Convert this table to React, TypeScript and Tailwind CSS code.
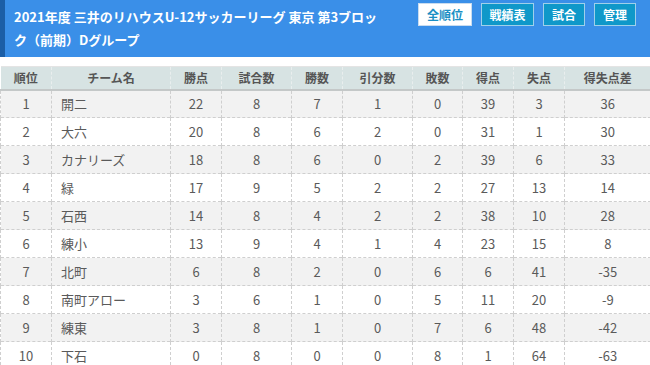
import React from 'react';

const rows = [
  [1, '開二', 22, 8, 7, 1, 0, 39, 3, 36],
  [2, '大六', 20, 8, 6, 2, 0, 31, 1, 30],
  [3, 'カナリーズ', 18, 8, 6, 0, 2, 39, 6, 33],
  [4, '緑', 17, 9, 5, 2, 2, 27, 13, 14],
  [5, '石西', 14, 8, 4, 2, 2, 38, 10, 28],
  [6, '練小', 13, 9, 4, 1, 4, 23, 15, 8],
  [7, '北町', 6, 8, 2, 0, 6, 6, 41, -35],
  [8, '南町アロー', 3, 6, 1, 0, 5, 11, 20, -9],
  [9, '練東', 3, 8, 1, 0, 7, 6, 48, -42],
  [10, '下石', 0, 8, 0, 0, 8, 1, 64, -63],
];

const heads = ['順位', 'チーム名', '勝点', '試合数', '勝数', '引分数', '敗数', '得点', '失点', '得失点差'];
const widths = [51, 119, 51, 70, 51, 70, 50, 51, 51, 86];

export default function App() {
  return (
    <div className="w-[650px] h-[365px] overflow-hidden bg-white font-['Noto_Sans_CJK_JP',sans-serif]">
      <header className="flex h-[57px] bg-[#3a8fe8] border-l-[5px] border-[#1b5ea6]">
        <h1 className="w-[389px] shrink-0 pl-[9px] pt-[5px] text-[13px] leading-[23px] font-bold text-white whitespace-nowrap">
          2021年度 三井のリハウスU-12サッカーリーグ 東京 第3ブロッ
          <br />
          ク（前期）Dグループ
        </h1>
        <nav className="flex gap-[9px] pl-[24px] pt-[3px] items-start">
          <button className="h-[23px] w-[54px] bg-white border border-[#c9dcef] text-[#1a8fc4] text-[12px] font-bold">全順位</button>
          <button className="h-[23px] w-[53px] bg-[#0f98c9] border border-[#9fd0ea] text-white text-[12px] font-bold">戦績表</button>
          <button className="h-[23px] w-[42px] bg-[#0f98c9] border border-[#9fd0ea] text-white text-[12px] font-bold">試合</button>
          <button className="h-[23px] w-[42px] bg-[#0f98c9] border border-[#9fd0ea] text-white text-[12px] font-bold">管理</button>
        </nav>
      </header>
      <table className="mt-[9px] w-[650px] table-fixed border-collapse text-[13px] text-[#5a5a5a]">
        <colgroup>
          {widths.map((w, i) => (
            <col key={i} style={{ width: w }} />
          ))}
        </colgroup>
        <thead>
          <tr className="h-[23px] bg-[#d7e3e3] border-t border-[#e4e4e4] border-b-2 border-b-[#c4c8c8]">
            {heads.map((h, i) => (
              <th key={i} className="border-l border-dashed border-l-[#e9eeee] first:border-l-0 text-[12px] font-bold text-[#555] text-center">{h}</th>
            ))}
          </tr>
        </thead>
        <tbody>
          {rows.map((r, ri) => (
            <tr key={ri} className={`h-[28px] border-b border-dashed border-[#cfcfcf] ${ri % 2 === 0 ? 'bg-[#f2f2f2]' : 'bg-white'}`}>
              {r.map((c, ci) => (
                <td
                  key={ci}
                  className={`border-l border-dashed border-[#cfcfcf] ${ci === 1 ? 'text-left pl-[9px]' : 'text-center'}`}
                >
                  {c}
                </td>
              ))}
            </tr>
          ))}
        </tbody>
      </table>
    </div>
  );
}
